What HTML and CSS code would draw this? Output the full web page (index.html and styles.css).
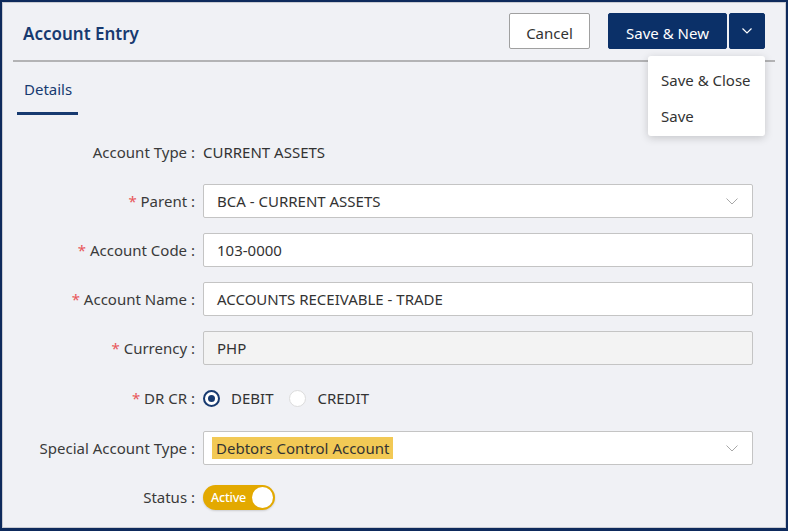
FILE: index.html
```html
<!DOCTYPE html>
<html>
<head>
<meta charset="utf-8">
<link rel="stylesheet" href="styles.css">
</head>
<body>
<div class="window">
  <header class="header">
    <h1 class="title">Account Entry</h1>
    <div class="actions">
      <button class="btn btn-cancel">Cancel</button>
      <div class="split">
        <button class="btn btn-primary">Save &amp; New</button>
        <button class="btn btn-caret"><svg width="10" height="6" viewBox="0 0 10 6"><path d="M0.5 0.5 L5 5 L9.5 0.5" fill="none" stroke="#fff" stroke-width="1.2"/></svg></button>
      </div>
    </div>
  </header>
  <nav class="tabs">
    <div class="tab active">Details</div>
  </nav>
  <form class="form">
    <div class="row">
      <label class="label">Account Type :</label>
      <div class="static">CURRENT ASSETS</div>
    </div>
    <div class="row">
      <label class="label"><span class="req">*</span> Parent :</label>
      <div class="field select">BCA - CURRENT ASSETS<svg class="chev" width="12" height="7" viewBox="0 0 12 7"><path d="M0.5 0.5 L6 6 L11.5 0.5" fill="none" stroke="#a8a8a8" stroke-width="1"/></svg></div>
    </div>
    <div class="row">
      <label class="label"><span class="req">*</span> Account Code :</label>
      <div class="field">103-0000</div>
    </div>
    <div class="row">
      <label class="label"><span class="req">*</span> Account Name :</label>
      <div class="field">ACCOUNTS RECEIVABLE - TRADE</div>
    </div>
    <div class="row">
      <label class="label"><span class="req">*</span> Currency :</label>
      <div class="field disabled">PHP</div>
    </div>
    <div class="row row-radio">
      <label class="label"><span class="req">*</span> DR CR :</label>
      <div class="radios">
        <span class="radio checked"></span><span class="radio-text">DEBIT</span>
        <span class="radio"></span><span class="radio-text">CREDIT</span>
      </div>
    </div>
    <div class="row">
      <label class="label">Special Account Type :</label>
      <div class="field select special"><span class="hl">Debtors Control Account</span><svg class="chev" width="12" height="7" viewBox="0 0 12 7"><path d="M0.5 0.5 L6 6 L11.5 0.5" fill="none" stroke="#a8a8a8" stroke-width="1"/></svg></div>
    </div>
    <div class="row">
      <label class="label">Status :</label>
      <div class="toggle"><span class="toggle-text">Active</span><span class="knob"></span></div>
    </div>
  </form>
  <div class="menu">
    <div class="menu-item">Save &amp; Close</div>
    <div class="menu-item">Save</div>
  </div>
</div>
</body>
</html>
```

FILE: styles.css
```css
* { box-sizing: border-box; }
html, body { margin: 0; padding: 0; }
body {
  width: 788px;
  height: 531px;
  font-family: "Noto Sans", "Open Sans", sans-serif;
  background: #0e2a5c;
}
.window {
  position: relative;
  width: 788px;
  height: 531px;
  border: 2px solid #0e2a5c;
  border-bottom-width: 3px;
  background: #f0f1f5;
  box-shadow: inset 0 0 0 1px #c9cbd2;
}
.header {
  display: flex;
  align-items: flex-start;
  justify-content: space-between;
  margin: 0 11px 0 11px;
  height: 60px;
  border-bottom: 2px solid #b3b3b5;
}
.title {
  margin: 21px 0 0 10px;
  font-size: 17px;
  font-weight: 600;
  color: #173a70;
  line-height: 22px;
}
.actions {
  display: flex;
  gap: 18px;
  margin-top: 11px;
  margin-right: 10px;
}
.btn {
  font-family: inherit;
  font-size: 15px;
  height: 36px;
  border-radius: 2px;
  cursor: pointer;
  padding: 3px 0 0;
}
.btn-cancel {
  width: 81px;
  background: #fff;
  border: 1px solid #a0a0a0;
  color: #333;
}
.split { display: flex; gap: 2px; }
.btn-primary {
  width: 119px;
  background: #0b3068;
  border: 1px solid #0b3068;
  color: #fff;
}
.btn-caret {
  width: 36px;
  padding: 0;
  background: #0b3068;
  border: 1px solid #0b3068;
  display: flex;
  align-items: center;
  justify-content: center;
}
.tabs {
  display: flex;
  margin-left: 15px;
  height: 53px;
}
.tab {
  width: 61px;
  padding-top: 17px;
  padding-left: 7px;
  font-size: 15px;
  color: #173a70;
  border-bottom: 3px solid #173a70;
  height: 53px;
}
.form {
  display: flex;
  flex-direction: column;
  gap: 15px;
  margin-top: 20px;
  padding-right: 33px;
}
.row {
  display: grid;
  grid-template-columns: 193px 1fr;
  column-gap: 8px;
  height: 34px;
  align-items: center;
}
.row-radio { height: 36px; }
.label {
  text-align: right;
  font-size: 15px;
  color: #3a3a3a;
  white-space: nowrap;
}
.req { color: #e8575a; }
.static {
  font-size: 15px;
  color: #333;
}
.field {
  position: relative;
  height: 34px;
  background: #fff;
  border: 1px solid #c4c4c4;
  border-radius: 2px;
  display: flex;
  align-items: center;
  padding-left: 13px;
  font-size: 15px;
  color: #333;
}
.field.disabled { background: #f3f3f3; }
.special { padding-left: 8px; }
.hl {
  background: #f2c955;
  padding: 0 4px;
  line-height: 22px;
}
.chev {
  position: absolute;
  right: 14px;
  top: 13px;
}
.radios {
  display: flex;
  align-items: center;
}
.radio {
  width: 17px;
  height: 17px;
  border-radius: 50%;
  background: #fff;
  border: 1px solid #dcdcdc;
  display: inline-block;
  position: relative;
}
.radio.checked { border: 2px solid #173a70; }
.radio.checked::after {
  content: "";
  position: absolute;
  left: 3px;
  top: 3px;
  width: 7px;
  height: 7px;
  border-radius: 50%;
  background: #173a70;
}
.radio-text {
  font-size: 15px;
  color: #333;
  margin-left: 11px;
  margin-right: 16px;
}
.toggle {
  width: 72px;
  height: 25px;
  border-radius: 13px;
  background: #e3a900;
  display: flex;
  align-items: center;
  justify-content: space-between;
  padding: 0 2px 0 8px;
  box-shadow: 0 1px 2px rgba(0,0,0,0.15);
}
.toggle-text {
  color: #fff;
  font-size: 12.5px;
  font-weight: 500;
  letter-spacing: -0.2px;
}
.knob {
  width: 21px;
  height: 21px;
  border-radius: 50%;
  background: #fff;
}
.menu {
  position: absolute;
  left: 646px;
  top: 54px;
  width: 117px;
  background: #fff;
  border-radius: 3px;
  box-shadow: 0 2px 8px rgba(0,0,0,0.18);
  padding: 6px 0 2px;
}
.menu-item {
  font-size: 15px;
  color: #333;
  height: 36px;
  line-height: 36px;
  padding-left: 13px;
}
```
